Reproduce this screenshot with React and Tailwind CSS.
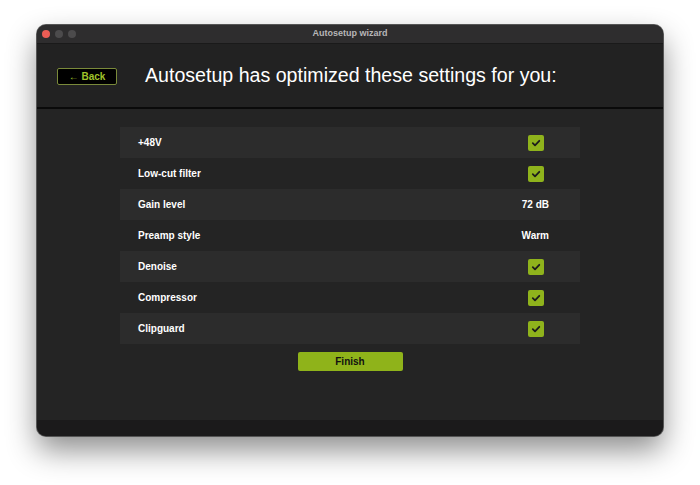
import React from 'react'

const settings = [
  { label: '+48V', value: true },
  { label: 'Low-cut filter', value: true },
  { label: 'Gain level', value: '72 dB' },
  { label: 'Preamp style', value: 'Warm' },
  { label: 'Denoise', value: true },
  { label: 'Compressor', value: true },
  { label: 'Clipguard', value: true },
]

function Check() {
  return (
    <div className="w-[16px] h-[16px] rounded-[2px] bg-[#8fb31c] flex items-center justify-center">
      <svg width="10" height="10" viewBox="0 0 10 10">
        <path d="M1.8 5.2 L4 7.3 L8.3 2.8" fill="none" stroke="#1c1c1c" strokeWidth="1.8" strokeLinecap="round" strokeLinejoin="round" />
      </svg>
    </div>
  )
}

export default function App() {
  return (
    <div className="w-[700px] h-[485px] bg-white pt-[25px] pl-[37px] font-['Liberation_Sans',Arial,sans-serif]">
      <div className="w-[626px] h-[411px] rounded-[9px] overflow-hidden flex flex-col bg-[#242424] shadow-[0_14px_30px_rgba(0,0,0,0.45)] ring-1 ring-[#555]">
        {/* Title bar */}
        <div className="h-[19px] bg-[#2e2d2e] flex items-center relative border-b border-[#1a1a1a]">
          <div className="flex gap-[5px] pl-[5px]">
            <span className="w-[8px] h-[8px] rounded-full bg-[#ec5d55]"></span>
            <span className="w-[8px] h-[8px] rounded-full bg-[#4c4b4c]"></span>
            <span className="w-[8px] h-[8px] rounded-full bg-[#4c4b4c]"></span>
          </div>
          <div className="absolute inset-0 flex items-center justify-center text-[9px] font-bold text-[#b7b6b7]">
            Autosetup wizard
          </div>
        </div>

        {/* Header */}
        <div className="h-[65px] bg-[#222222] flex items-center border-b-[2px] border-[#0a0a0a] pl-[20px] pt-[1px]">
          <button className="w-[60px] h-[17px] bg-black border border-[#7a8a3a] rounded-[2px] text-[10px] font-bold text-[#9fc22a] flex items-center justify-center">
            ← Back
          </button>
          <h1 className="ml-[28px] text-[19.6px] text-white leading-none">
            Autosetup has optimized these settings for you:
          </h1>
        </div>

        {/* Body */}
        <div className="flex-1 bg-[#242424] flex flex-col items-center pt-[18px]">
          <div className="w-[460px] flex flex-col">
            {settings.map((s, i) => (
              <div
                key={s.label}
                className={`h-[31px] flex items-center justify-between pl-[18px] pr-[31px] ${i % 2 === 0 ? 'bg-[#2c2c2c]' : 'bg-[#242424]'}`}
              >
                <span className="text-[10px] font-bold text-white">{s.label}</span>
                {s.value === true ? (
                  <div className="mr-[5px]"><Check /></div>
                ) : (
                  <span className="text-[10px] font-bold text-white">{s.value}</span>
                )}
              </div>
            ))}
          </div>
          <button className="mt-[8px] w-[105px] h-[19px] rounded-[2px] bg-[#8fb31a] text-[10px] font-bold text-[#111] flex items-center justify-center">
            Finish
          </button>
        </div>

        {/* Bottom bar */}
        <div className="h-[16px] bg-[#1b1a1b]"></div>
      </div>
    </div>
  )
}
